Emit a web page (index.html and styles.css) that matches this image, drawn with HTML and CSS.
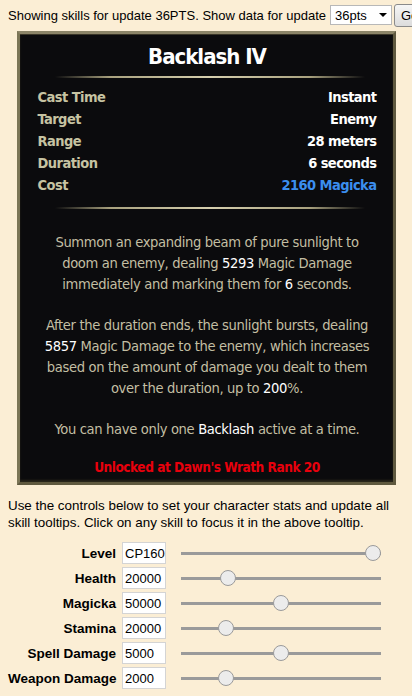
FILE: index.html
```html
<!DOCTYPE html>
<html>
<head>
<meta charset="utf-8">
<link rel="stylesheet" href="styles.css">
</head>
<body>
<div class="topbar">
  <span>Showing skills for update 36PTS. Show data for update</span>
  <span class="selectwrap">
    <select class="version"><option>36pts</option></select>
    <span class="arrow"></span>
  </span>
  <button class="gobtn">Go</button>
</div>

<div class="tooltip">
  <div class="title">Backlash IV</div>
  <div class="sep"></div>
  <div class="stats">
    <div class="row"><span class="lbl">Cast Time</span><span class="val">Instant</span></div>
    <div class="row"><span class="lbl">Target</span><span class="val">Enemy</span></div>
    <div class="row"><span class="lbl">Range</span><span class="val">28 meters</span></div>
    <div class="row"><span class="lbl">Duration</span><span class="val">6 seconds</span></div>
    <div class="row"><span class="lbl">Cost</span><span class="val cost">2160 Magicka</span></div>
  </div>
  <div class="sep sep2"></div>
  <div class="desc">
    <p>Summon an expanding beam of pure sunlight to<br>doom an enemy, dealing <b>5293</b> Magic Damage<br>immediately and marking them for <b>6</b> seconds.</p>
    <p>After the duration ends, the sunlight bursts, dealing<br><b>5857</b> Magic Damage to the enemy, which increases<br>based on the amount of damage you dealt to them<br>over the duration, up to <b>200</b>%.</p>
    <p>You can have only one <b>Backlash</b> active at a time.</p>
  </div>
  <div class="unlock">Unlocked at Dawn's Wrath Rank 20</div>
</div>

<p class="help">Use the controls below to set your character stats and update all skill tooltips. Click on any skill to focus it in the above tooltip.</p>

<div class="controls">
  <label class="clabel">Level</label><input class="cinput" type="text" value="CP160"><input class="slider" type="range" min="0" max="100" value="100">
  <label class="clabel">Health</label><input class="cinput" type="text" value="20000"><input class="slider" type="range" min="0" max="100" value="21">
  <label class="clabel">Magicka</label><input class="cinput" type="text" value="50000"><input class="slider" type="range" min="0" max="100" value="50">
  <label class="clabel">Stamina</label><input class="cinput" type="text" value="20000"><input class="slider" type="range" min="0" max="100" value="20">
  <label class="clabel">Spell Damage</label><input class="cinput" type="text" value="5000"><input class="slider" type="range" min="0" max="100" value="50">
  <label class="clabel">Weapon Damage</label><input class="cinput" type="text" value="2000"><input class="slider" type="range" min="0" max="100" value="20">
</div>
</body>
</html>
```

FILE: styles.css
```css
html, body {
  margin: 0;
  padding: 0;
  background: #fbeed5;
  overflow: hidden;
}
body {
  padding: 0 8px;
  font-family: "Liberation Sans", Arial, sans-serif;
  font-size: 13px;
  color: #000;
  width: 396px;
}
.topbar {
  height: 28px;
  display: flex;
  align-items: center;
  white-space: nowrap;
  gap: 4px;
  padding-top: 2px;
  box-sizing: border-box;
}
.selectwrap {
  position: relative;
  display: inline-block;
}
.version {
  appearance: none;
  -webkit-appearance: none;
  width: 62px;
  height: 20px;
  border: 1px solid #b8b8b8;
  background: #fff;
  font-family: "Liberation Sans", Arial, sans-serif;
  font-size: 13px;
  padding: 0 0 0 4px;
  margin: 0;
  border-radius: 0;
  color: #000;
}
.arrow {
  position: absolute;
  right: 5px;
  top: 8px;
  width: 0;
  height: 0;
  border-left: 4px solid transparent;
  border-right: 4px solid transparent;
  border-top: 4px solid #000;
}
.gobtn {
  height: 23px;
  padding: 0 6px;
  margin-left: -2px;
  border: 1px solid #8a8a8a;
  border-radius: 3px;
  background: linear-gradient(#f6f6f6, #dcdcdc);
  font-family: "Liberation Sans", Arial, sans-serif;
  font-size: 13px;
  color: #000;
}
.tooltip {
  width: 379px;
  box-sizing: border-box;
  margin: 3px auto 0;
  background: #0b0b0d;
  border: 3px solid #5f593f;
  border-top-color: #8c8568;
  border-left-color: #7b7556;
  box-shadow: inset 0 1px 0 #3a3628, inset 0 -2px 2px #2a271c;
  padding: 8px 16px 4px 18px;
  font-family: "DejaVu Sans Condensed", "DejaVu Sans", sans-serif;
}
.title {
  text-align: center;
  color: #fff;
  font-weight: bold;
  font-size: 22px;
  letter-spacing: -1px;
  line-height: 30px;
}
.sep {
  height: 2px;
  margin: 4px 12px 0 17px;
  background: linear-gradient(to right, rgba(180,172,135,0), #a9a27f 18%, #d6cfae 50%, #a9a27f 82%, rgba(180,172,135,0));
}
.sep2 {
  margin-top: 11px;
}
.stats {
  margin-top: 8px;
}
.row {
  display: flex;
  justify-content: space-between;
  height: 22px;
  line-height: 22px;
  font-size: 14.5px;
  letter-spacing: -0.55px;
  font-weight: bold;
}
.lbl { color: #c6c3a2; }
.val { color: #fff; }
.val.cost { color: #3b8eef; }
.desc {
  margin-top: 22px;
  text-align: center;
  color: #c3bfa3;
  font-size: 14.6px;
  letter-spacing: -0.35px;
  line-height: 21px;
  white-space: nowrap;
}
.desc p {
  margin: 0 0 20px;
}
.desc b {
  color: #fff;
  font-weight: normal;
}
.desc p:last-child { margin-bottom: 0; }
.unlock {
  margin-top: 18px;
  text-align: center;
  color: #e8000c;
  font-size: 13.6px;
  letter-spacing: -0.5px;
  font-weight: bold;
  line-height: 21px;
}
.help {
  margin: 12px 0 0;
  line-height: 17px;
  font-size: 13.4px;
  width: 385px;
}
.controls {
  display: grid;
  grid-template-columns: 108px 44px 200px;
  column-gap: 6px;
  row-gap: 3px;
  margin-top: 11px;
  align-items: center;
}
.clabel {
  text-align: right;
  font-weight: bold;
  font-size: 13.5px;
  white-space: nowrap;
}
.cinput {
  width: 44px;
  height: 22px;
  box-sizing: border-box;
  border: 1px solid #d4d4d4;
  padding: 0 0 0 2px;
  margin: 0;
  font-family: "Liberation Sans", Arial, sans-serif;
  font-size: 13px;
  color: #000;
  background: #fff;
}
.slider {
  -webkit-appearance: none;
  appearance: none;
  width: 200px;
  height: 16px;
  margin: 0 0 0 9px;
  padding: 0;
  background: transparent;
}
.slider::-webkit-slider-runnable-track {
  height: 3px;
  background: #9a9a9a;
  border: none;
}
.slider::-webkit-slider-thumb {
  -webkit-appearance: none;
  appearance: none;
  width: 16px;
  height: 16px;
  margin-top: -6.5px;
  border-radius: 50%;
  background: #ececec;
  border: 1px solid #9a9a9a;
  box-sizing: border-box;
}
```
